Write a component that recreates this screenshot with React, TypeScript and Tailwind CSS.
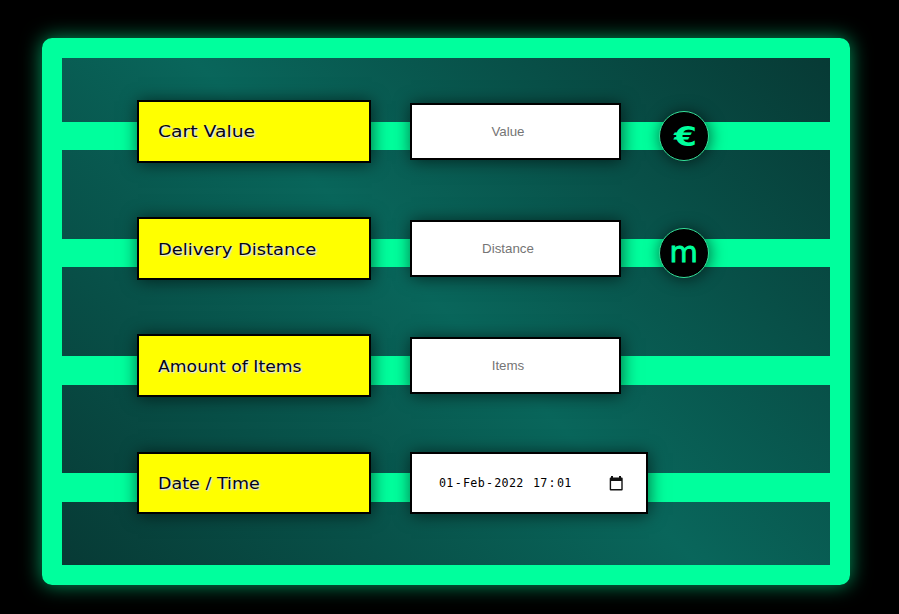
import type { ReactNode } from "react";

const boxShadow = "shadow-[1px_1px_16px_rgba(0,0,0,0.6)]";

function Row({ className, children }: { className: string; children: ReactNode }) {
  return <div className={`flex items-start bg-[#00ff9d] pl-[75px] ${className}`}>{children}</div>;
}

function Label({ className = "", text, stretch }: { className?: string; text: string; stretch: string }) {
  return (
    <label
      className={`flex w-[234px] shrink-0 items-center border-2 border-black bg-[#ffff00] pl-[19px] ${boxShadow} ${className || "-mt-[22px] h-[63px]"}`}
    >
      <span
        className={`block origin-left whitespace-nowrap font-['DejaVu_Sans',sans-serif] text-[15.5px] leading-5 text-[#050510] [text-shadow:1px_1px_1px_#e8e8e8,1px_1px_2px_#d3d3d3] ${stretch}`}
      >
        {text}
      </span>
    </label>
  );
}

function Field({ placeholder }: { placeholder: string }) {
  return (
    <input
      type="text"
      placeholder={placeholder}
      className={`-mt-[19px] ml-[39px] h-[57px] w-[211px] shrink-0 rounded-none border-2 border-black bg-white pr-[15px] text-center font-['Liberation_Sans',sans-serif] text-[13.333px] outline-none placeholder:text-[#757575] ${boxShadow}`}
    />
  );
}

function Unit({ children }: { children: ReactNode }) {
  return (
    <div
      className={`-mt-[11px] ml-[38px] flex h-[50px] w-[50px] shrink-0 items-center justify-center rounded-full border border-[#35e29a] bg-black font-['DejaVu_Sans',sans-serif] text-[#00ff9d] ${boxShadow}`}
    >
      {children}
    </div>
  );
}

function CalendarIcon() {
  return (
    <svg className="ml-9" width="14" height="15" viewBox="0 0 14 15" aria-hidden="true">
      <path
        fillRule="evenodd"
        d="M2 0h2v1.4h6V0h2v1.4h.7q1 0 1 1v11q0 1-1 1H1.7q-1 0-1-1v-11q0-1 1-1H2zM2.1 5v8h10.2V5z"
        fill="#111"
      />
    </svg>
  );
}

export default function App() {
  return (
    <main className="h-[614px] w-[899px] overflow-hidden bg-black pl-[42px] pt-[38px]">
      <form className="flex h-[547px] w-[808px] flex-col rounded-[10px] border-[20px] border-[#00ff9d] bg-[linear-gradient(45deg,#073a35_0%,#09665b_50%,#073a35_100%)] bg-origin-padding pt-16 shadow-[0_0_20px_#00ff9d99]">
        <Row className="mb-[89px] h-7">
          <Label text="Cart Value" stretch="scale-x-[1.21]" />
          <Field placeholder="Value" />
          <Unit>
            <span className="block translate-x-px scale-x-[1.22] text-[27px] font-bold leading-none">€</span>
          </Unit>
        </Row>
        <Row className="mb-[89px] h-7">
          <Label text="Delivery Distance" stretch="translate-y-px scale-x-[1.155]" />
          <Field placeholder="Distance" />
          <Unit>
            <span className="block scale-x-[1.04] text-[28px] leading-none [-webkit-text-stroke:0.8px_#00ff9d]">m</span>
          </Unit>
        </Row>
        <Row className="mb-[88px] h-[29px]">
          <Label text="Amount of Items" stretch="translate-y-px scale-x-[1.112]" />
          <Field placeholder="Items" />
        </Row>
        <Row className="h-[29px]">
          <Label className="-mt-[21px] h-[62px]" text="Date / Time" stretch="translate-y-px scale-x-[1.13]" />
          <div
            className={`-mt-[21px] ml-[39px] flex h-[62px] w-[238px] shrink-0 items-center border-2 border-black bg-white pl-[26px] ${boxShadow}`}
          >
            <div className="flex whitespace-pre font-['DejaVu_Sans_Mono',monospace] text-[11.7px] leading-4 tracking-[0.29px] text-black">
              <span className="px-px">01</span>-<span className="px-px">Feb</span>-<span className="px-px">2022</span>
              <span> </span>
              <span className="px-px">17</span>:<span className="px-px">01</span>
            </div>
            <CalendarIcon />
          </div>
        </Row>
      </form>
    </main>
  );
}
